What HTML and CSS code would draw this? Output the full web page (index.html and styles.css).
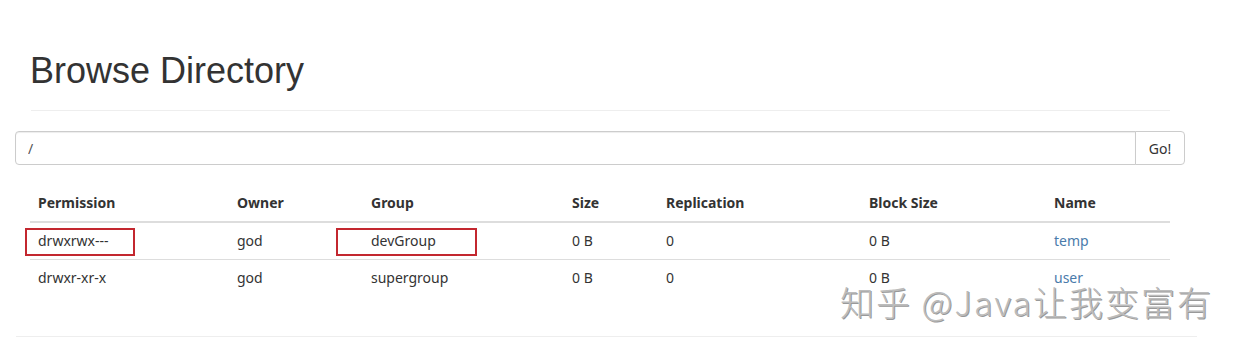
FILE: index.html
```html
<!DOCTYPE html>
<html>
<head>
    <meta charset="utf-8">
    <title>Browsing HDFS</title>
    <link rel="stylesheet" href="styles.css">
</head>
<body>
    <div class="container">
        <div class="page-header">
            <h1>Browse Directory</h1>
        </div>

        <form class="path-form" onsubmit="return false;">
            <input class="path-input" type="text" value="/">
            <button class="path-go" type="submit">Go!</button>
        </form>

        <table class="dir-table">
            <thead>
                <tr>
                    <th class="col-perm">Permission</th>
                    <th class="col-owner">Owner</th>
                    <th class="col-group">Group</th>
                    <th class="col-size">Size</th>
                    <th class="col-repl">Replication</th>
                    <th class="col-block">Block Size</th>
                    <th class="col-name">Name</th>
                </tr>
            </thead>
            <tbody>
                <tr>
                    <td class="marked mark-perm">drwxrwx---</td>
                    <td>god</td>
                    <td class="marked mark-group">devGroup</td>
                    <td>0 B</td>
                    <td>0</td>
                    <td>0 B</td>
                    <td><a href="#/temp">temp</a></td>
                </tr>
                <tr>
                    <td>drwxr-xr-x</td>
                    <td>god</td>
                    <td>supergroup</td>
                    <td>0 B</td>
                    <td>0</td>
                    <td>0 B</td>
                    <td><a href="#/user">user</a></td>
                </tr>
            </tbody>
        </table>
    </div>

    <hr class="footer-rule">

    <!-- 水印 -->
    <div class="watermark">知乎 @Java让我变富有</div>
</body>
</html>
```

FILE: styles.css
```css
body {
    margin: 0;
    font-family: "Noto Sans", "Noto Sans CJK SC", sans-serif;
    font-size: 14px;
    line-height: 20px;
    color: #333;
    background: #fff;
    position: relative;
}
.container {
    padding: 0 74px 0 30px;
}
.page-header {
    margin: 51px 0 20px 1px;
    padding-bottom: 9px;
    border-bottom: 1px solid #eee;
}
h1 {
    margin: 0 0 10px -1px;
    font-family: "Liberation Sans", Arial, sans-serif;
    font-size: 36px;
    font-weight: 500;
    line-height: 40px;
    color: #333;
}
.path-form {
    display: flex;
    margin: 0 -15px 20px -15px;
}
.path-input {
    flex: 1;
    height: 34px;
    box-sizing: border-box;
    padding: 6px 12px;
    border: 1px solid #ccc;
    border-radius: 4px 0 0 4px;
    font-family: "Noto Sans", sans-serif;
    font-size: 14px;
    color: #555;
    box-shadow: inset 0 1px 1px rgba(0, 0, 0, .075);
}
.path-go {
    width: 50px;
    height: 34px;
    margin-left: -1px;
    padding: 6px 0;
    border: 1px solid #ccc;
    border-radius: 0 4px 4px 0;
    background: #fff;
    font-family: "Noto Sans", sans-serif;
    font-size: 14px;
    color: #333;
}
.dir-table {
    width: 100%;
    border-collapse: collapse;
    border-spacing: 0;
}
.dir-table th,
.dir-table td {
    padding: 8px;
    text-align: left;
    vertical-align: top;
}
.dir-table th {
    font-weight: bold;
    border-bottom: 2px solid #ddd;
}
.dir-table td {
    border-top: 1px solid #ddd;
}
.col-perm { width: 183px; }
.col-owner { width: 118px; }
.col-group { width: 185px; }
.col-size { width: 78px; }
.col-repl { width: 187px; }
.col-block { width: 169px; }
.dir-table a {
    color: #4a7bab;
    text-decoration: none;
}
.marked {
    position: relative;
}
.marked::after {
    content: "";
    position: absolute;
    top: 5px;
    height: 24px;
    border: 2px solid #c3272f;
}
.mark-perm::after {
    left: -5px;
    width: 106px;
}
.mark-group::after {
    left: -27px;
    width: 137px;
}
.footer-rule {
    margin: 40px 47px 0 16px;
    border: 0;
    border-top: 1px solid #eee;
}
.watermark {
    position: absolute;
    left: 840px;
    top: 286px;
    font-family: "Noto Sans CJK SC", sans-serif;
    font-size: 34px;
    font-weight: 300;
    line-height: 32px;
    letter-spacing: 2px;
    color: #bcbcbc;
    text-shadow: 1px 1px 0 #999, -1px -1px 0 #fff;
    white-space: nowrap;
}
```
